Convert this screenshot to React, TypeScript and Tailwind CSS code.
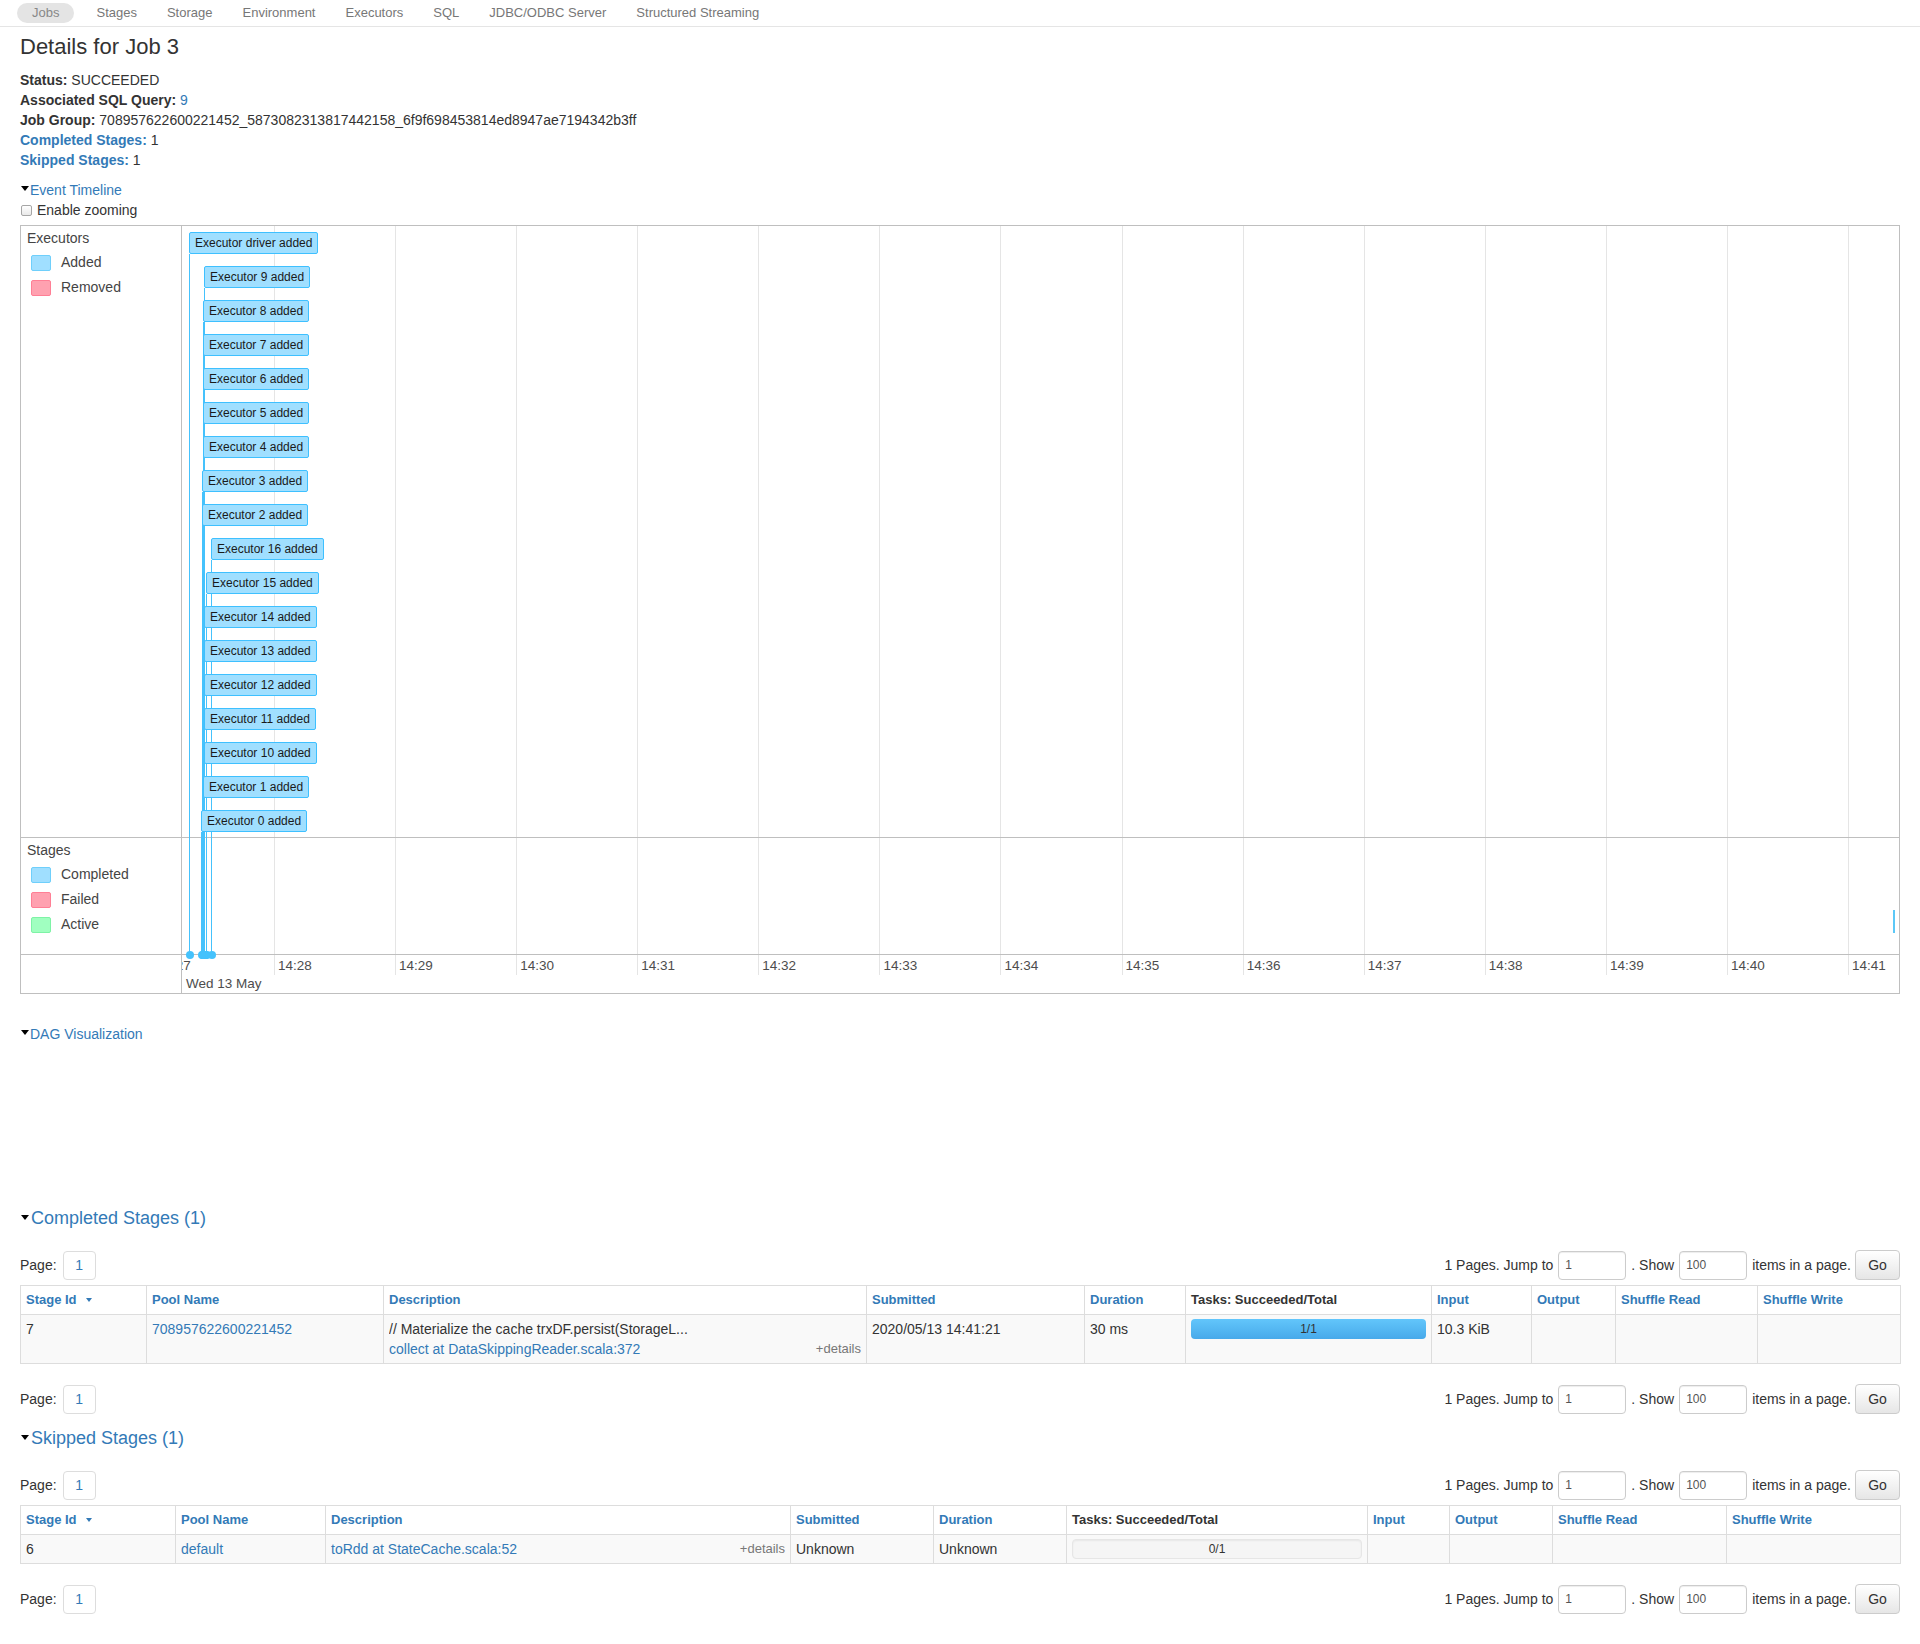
const navItems = [
  "Jobs",
  "Stages",
  "Storage",
  "Environment",
  "Executors",
  "SQL",
  "JDBC/ODBC Server",
  "Structured Streaming",
];

// timeline geometry, in px relative to the chart area
const GRID = Array.from({ length: 14 }, (_, i) => 92 + i * 121.08);
const AXIS_LABELS = Array.from({ length: 15 }, (_, i) => ({
  label: `14:${27 + i}`,
  x: 92 + (i - 1) * 121.08 + 4,
}));
const AXIS_Y = 728;

const executors: { name: string; x: number }[] = [
  { name: "driver", x: 7 },
  { name: "9", x: 22 },
  { name: "8", x: 21 },
  { name: "7", x: 21 },
  { name: "6", x: 21 },
  { name: "5", x: 21 },
  { name: "4", x: 21 },
  { name: "3", x: 20 },
  { name: "2", x: 20 },
  { name: "16", x: 29 },
  { name: "15", x: 24 },
  { name: "14", x: 22 },
  { name: "13", x: 22 },
  { name: "12", x: 22 },
  { name: "11", x: 22 },
  { name: "10", x: 22 },
  { name: "1", x: 21 },
  { name: "0", x: 19 },
];

const Arrow = ({ top = "mt-[6px]" }: { top?: string }) => (
  <span
    className={`${top} mr-px ml-px inline-block h-0 w-0 shrink-0 border-t-[5px] border-r-[4px] border-l-[4px] border-t-black border-r-transparent border-l-transparent`}
  />
);

const NavBar = () => (
  <div className="flex h-[27px] items-center border-b border-[#e5e5e5] pl-[17px] text-[13px] text-[#777]">
    {navItems.map((item, i) =>
      i === 0 ? (
        <span
          key={item}
          className="mr-[7px] flex h-[20px] items-center rounded-full bg-[#e4e4e4] px-[15px] text-[#888]"
        >
          {item}
        </span>
      ) : (
        <span key={item} className="px-[15px]">
          {item}
        </span>
      )
    )}
  </div>
);

interface LegendItem {
  label: string;
  swatch: string;
}

const Legend = ({
  title,
  items,
  first,
}: {
  title: string;
  items: LegendItem[];
  first: string;
}) => (
  <div className="flex w-[161px] shrink-0 flex-col border-r border-[#bfbfbf] pl-[6px] text-[14px] text-[#444]">
    <div className="mt-[2px] leading-[20px]">{title}</div>
    <div className={`${first} flex flex-col`}>
      {items.map((it) => (
        <div key={it.label} className="flex h-[25px] items-center">
          <span
            className={`ml-[4px] mr-[10px] h-[16px] w-[20px] rounded-[2px] border ${it.swatch}`}
          />
          <span>{it.label}</span>
        </div>
      ))}
    </div>
  </div>
);

const GridLines = ({ short }: { short?: boolean }) => (
  <>
    {GRID.map((x) => (
      <div
        key={x}
        className={`absolute top-0 w-px bg-[#e5e5e5] ${short ? "h-[20px]" : "bottom-0"}`}
        style={{ left: x }}
      />
    ))}
  </>
);

const Timeline = () => (
  <div className="relative mt-[5px] flex flex-col border border-[#bfbfbf]">
    <div className="flex h-[612px] border-b border-[#bfbfbf]">
      <Legend
        title="Executors"
        first="mt-[2px]"
        items={[
          { label: "Added", swatch: "bg-[#A0DFFF] border-[#6fcffb]" },
          { label: "Removed", swatch: "bg-[#FFA1B0] border-[#ff7f95]" },
        ]}
      />
      <div className="relative flex-1 overflow-hidden">
        <GridLines />
      </div>
    </div>
    <div className="flex h-[117px] border-b border-[#bfbfbf]">
      <Legend
        title="Stages"
        first="mt-[2px]"
        items={[
          { label: "Completed", swatch: "bg-[#A0DFFF] border-[#6fcffb]" },
          { label: "Failed", swatch: "bg-[#FFA1B0] border-[#ff7f95]" },
          { label: "Active", swatch: "bg-[#A0FFC0] border-[#7ef3a6]" },
        ]}
      />
      <div className="relative flex-1 overflow-hidden">
        <GridLines />
      </div>
    </div>
    <div className="flex h-[38px]">
      <div className="w-[161px] shrink-0 border-r border-[#bfbfbf]" />
      <div className="relative flex-1 overflow-hidden text-[13.5px] leading-[20px] text-[#4d4d4d]">
        <GridLines short />
        {AXIS_LABELS.map((a) => (
          <span key={a.label} className="absolute top-px" style={{ left: a.x }}>
            {a.label}
          </span>
        ))}
        <span className="absolute top-[19px] left-[4px]">Wed 13 May</span>
      </div>
    </div>

    {/* items drawn on the chart canvas */}
    <div className="pointer-events-none absolute top-0 right-0 left-[161px] h-[729px]">
      {executors.map((e, i) => {
        const bottom = 6 + 34 * i + 22;
        return (
          <div
            key={`line-${e.name}`}
            className="absolute w-px bg-[#45c2fc]"
            style={{ left: e.x, top: bottom, height: AXIS_Y - bottom }}
          />
        );
      })}
      {executors.map((e) => (
        <div
          key={`dot-${e.name}`}
          className="absolute h-[8px] w-[8px] rounded-full bg-[#45c2fc]"
          style={{ left: e.x - 3.5, top: AXIS_Y - 3.5 }}
        />
      ))}
      {executors.map((e, i) => (
        <div
          key={`box-${e.name}`}
          className="absolute rounded-[2px] border border-[#3EC0FF] bg-[#A0DFFF] px-[5px] py-[3px] text-[12px] leading-[14px] whitespace-nowrap text-[#1a1a1a]"
          style={{ left: e.x, top: 6 + 34 * i }}
        >
          Executor {e.name} added
        </div>
      ))}
      <div className="absolute top-[684px] left-[1711px] h-[23px] w-[2px] bg-[#5cc8f7]" />
    </div>
  </div>
);

const PageControls = () => (
  <div className="flex h-[30px] items-center justify-between text-[14px]">
    <div className="flex items-center">
      <span>Page:</span>
      <span className="ml-[6px] flex h-[29px] w-[33px] items-center justify-center rounded-[4px] border border-[#ddd] text-[#337ab7]">
        1
      </span>
    </div>
    <div className="flex items-center">
      <span>1 Pages. Jump to</span>
      <input
        readOnly
        value="1"
        className="ml-[5px] h-[29px] w-[68px] rounded-[4px] border border-[#ccc] pl-[6px] text-[12px] text-[#555] shadow-[inset_0_1px_1px_rgba(0,0,0,0.075)]"
      />
      <span className="ml-[5px]">. Show</span>
      <input
        readOnly
        value="100"
        className="ml-[5px] h-[29px] w-[68px] rounded-[4px] border border-[#ccc] pl-[6px] text-[12px] text-[#555] shadow-[inset_0_1px_1px_rgba(0,0,0,0.075)]"
      />
      <span className="ml-[5px]">items in a page.</span>
      <button className="ml-[4px] h-[30px] w-[45px] rounded-[4px] border border-[#ccc] bg-linear-to-b from-white to-[#e6e6e6] text-[14px] text-[#333]">
        Go
      </button>
    </div>
  </div>
);

const SortArrow = () => (
  <span className="mb-[2px] ml-[9px] inline-block h-0 w-0 border-t-[4px] border-r-[3px] border-l-[3px] border-t-[#337ab7] border-r-transparent border-l-transparent align-middle" />
);

const headers = [
  "Stage Id",
  "Pool Name",
  "Description",
  "Submitted",
  "Duration",
  "Tasks: Succeeded/Total",
  "Input",
  "Output",
  "Shuffle Read",
  "Shuffle Write",
];

const th = "border border-[#ddd] px-[5px] py-[4px] text-left align-top text-[13px] leading-[20px] font-bold";
const td = "border border-[#ddd] px-[5px] py-[4px] align-top leading-[20px]";

const StageTable = ({
  cols,
  children,
}: {
  cols: string[];
  children: React.ReactNode;
}) => (
  <table className="mt-[5px] w-full table-fixed border-collapse text-[14px]">
    <colgroup>
      {cols.map((c, i) => (
        <col key={i} className={c} />
      ))}
    </colgroup>
    <thead>
      <tr>
        {headers.map((h) => (
          <th
            key={h}
            className={`${th} ${h.startsWith("Tasks") ? "text-[#333]" : "text-[#337ab7]"}`}
          >
            {h}
            {h === "Stage Id" && <SortArrow />}
          </th>
        ))}
      </tr>
    </thead>
    <tbody className="bg-[#f9f9f9]">{children}</tbody>
  </table>
);

const Section = ({ title, mt }: { title: string; mt: string }) => (
  <div className={`${mt} flex items-start text-[18px] leading-[21px] text-[#337ab7]`}>
    <Arrow top="mt-[7px]" />
    <span className="ml-px">{title}</span>
  </div>
);

export default function App() {
  return (
    <div className="min-h-[1644px] bg-white font-['Liberation_Sans',Arial,sans-serif] text-[#333]">
      <NavBar />
      <div className="px-[20px] pb-[30px]">
        <h3 className="mt-[7px] text-[22px] leading-[26px] font-normal">Details for Job 3</h3>

        <div className="mt-[10px] flex flex-col text-[14px] leading-[20px]">
          <div>
            <b>Status:</b> SUCCEEDED
          </div>
          <div>
            <b>Associated SQL Query:</b> <span className="text-[#337ab7]">9</span>
          </div>
          <div>
            <b>Job Group:</b> 708957622600221452_5873082313817442158_6f9f698453814ed8947ae7194342b3ff
          </div>
          <div>
            <b className="text-[#337ab7]">Completed Stages:</b> 1
          </div>
          <div>
            <b className="text-[#337ab7]">Skipped Stages:</b> 1
          </div>
        </div>

        <div className="mt-[10px] flex items-start text-[14px] leading-[20px] text-[#337ab7]">
          <Arrow />
          <span>Event Timeline</span>
        </div>
        <div className="flex h-[20px] items-center text-[14px]">
          <span className="mr-[5px] ml-px h-[11px] w-[11px] rounded-[2px] border border-[#a6a6a6] bg-linear-to-b from-white to-[#e9e9e9]" />
          <span>Enable zooming</span>
        </div>

        <Timeline />

        <div className="mt-[30px] flex items-start text-[14px] leading-[20px] text-[#337ab7]">
          <Arrow />
          <span>DAG Visualization</span>
        </div>

        <Section title="Completed Stages (1)" mt="mt-[164px]" />
        <div className="mt-[21px]">
          <PageControls />
        </div>
        <StageTable
          cols={[
            "w-[126px]",
            "w-[237px]",
            "w-[483px]",
            "w-[218px]",
            "w-[101px]",
            "w-[246px]",
            "w-[100px]",
            "w-[84px]",
            "w-[142px]",
            "w-[143px]",
          ]}
        >
          <tr>
            <td className={td}>7</td>
            <td className={`${td} text-[#337ab7]`}>708957622600221452</td>
            <td className={td}>
              <div className="truncate">// Materialize the cache trxDF.persist(StorageL...</div>
              <div className="flex items-center justify-between">
                <span className="text-[#337ab7]">collect at DataSkippingReader.scala:372</span>
                <span className="text-[13px] text-[#777]">+details</span>
              </div>
            </td>
            <td className={td}>2020/05/13 14:41:21</td>
            <td className={td}>30 ms</td>
            <td className={td}>
              <div className="flex h-[20px] items-center justify-center rounded-[4px] bg-linear-to-b from-[#62c6fb] to-[#47a9ea] text-[12px] text-[#333]">
                1/1
              </div>
            </td>
            <td className={td}>10.3 KiB</td>
            <td className={td}></td>
            <td className={td}></td>
            <td className={td}></td>
          </tr>
        </StageTable>
        <div className="mt-[20px]">
          <PageControls />
        </div>

        <Section title="Skipped Stages (1)" mt="mt-[14px]" />
        <div className="mt-[21px]">
          <PageControls />
        </div>
        <StageTable
          cols={[
            "w-[155px]",
            "w-[150px]",
            "w-[465px]",
            "w-[143px]",
            "w-[133px]",
            "w-[301px]",
            "w-[82px]",
            "w-[103px]",
            "w-[174px]",
            "w-[174px]",
          ]}
        >
          <tr>
            <td className={td}>6</td>
            <td className={`${td} text-[#337ab7]`}>default</td>
            <td className={td}>
              <div className="flex items-center justify-between">
                <span className="text-[#337ab7]">toRdd at StateCache.scala:52</span>
                <span className="text-[13px] text-[#777]">+details</span>
              </div>
            </td>
            <td className={td}>Unknown</td>
            <td className={td}>Unknown</td>
            <td className={td}>
              <div className="flex h-[20px] items-center justify-center rounded-[4px] border border-[#e6e6e6] bg-[#f5f5f5] text-[12px] text-[#333] shadow-[inset_0_1px_2px_rgba(0,0,0,0.06)]">
                0/1
              </div>
            </td>
            <td className={td}></td>
            <td className={td}></td>
            <td className={td}></td>
            <td className={td}></td>
          </tr>
        </StageTable>
        <div className="mt-[20px]">
          <PageControls />
        </div>
      </div>
    </div>
  );
}
